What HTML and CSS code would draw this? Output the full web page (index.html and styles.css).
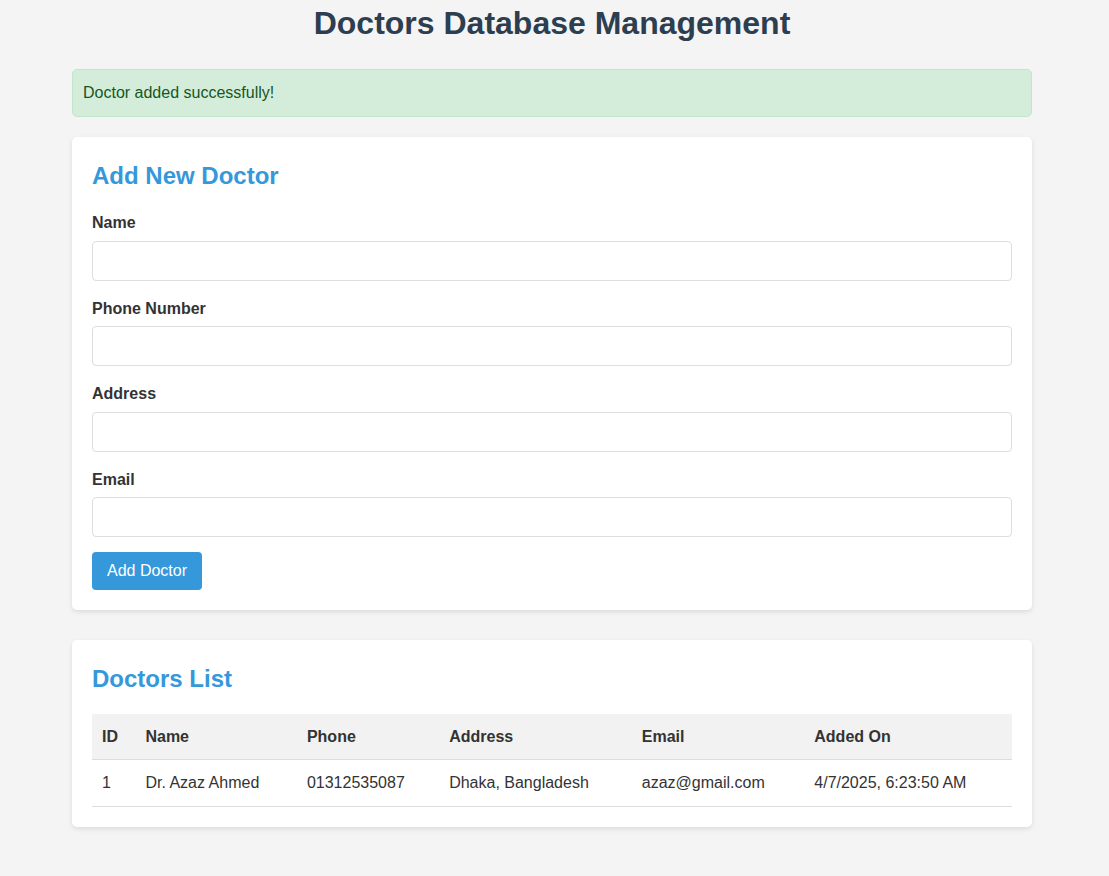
FILE: index.html
```html
<!DOCTYPE html>
<html lang="en">
<head>
<meta charset="UTF-8">
<title>Doctors Database Management</title>
<link rel="stylesheet" href="styles.css">
</head>
<body>
<div class="container">
  <h1 class="page-title">Doctors Database Management</h1>

  <div class="alert alert-success">Doctor added successfully!</div>

  <div class="card">
    <h2 class="card-title">Add New Doctor</h2>
    <form class="doctor-form">
      <div class="form-group">
        <label for="name">Name</label>
        <input type="text" id="name" class="form-input">
      </div>
      <div class="form-group">
        <label for="phone">Phone Number</label>
        <input type="text" id="phone" class="form-input">
      </div>
      <div class="form-group">
        <label for="address">Address</label>
        <input type="text" id="address" class="form-input">
      </div>
      <div class="form-group">
        <label for="email">Email</label>
        <input type="email" id="email" class="form-input">
      </div>
      <button type="button" class="btn">Add Doctor</button>
    </form>
  </div>

  <div class="card">
    <h2 class="card-title">Doctors List</h2>
    <table class="doctors-table">
      <thead>
        <tr>
          <th>ID</th>
          <th>Name</th>
          <th>Phone</th>
          <th>Address</th>
          <th>Email</th>
          <th>Added On</th>
        </tr>
      </thead>
      <tbody>
        <tr>
          <td>1</td>
          <td>Dr. Azaz Ahmed</td>
          <td>01312535087</td>
          <td>Dhaka, Bangladesh</td>
          <td>azaz@gmail.com</td>
          <td>4/7/2025, 6:23:50 AM</td>
        </tr>
      </tbody>
    </table>
  </div>
</div>
</body>
</html>
```

FILE: styles.css
```css
* {
  box-sizing: border-box;
}

html, body {
  margin: 0;
}

body {
  font-family: "Liberation Sans", Arial, sans-serif;
  background-color: #f4f4f4;
  color: #333;
  line-height: 1.6;
  padding: 3px 5px 0 0;
}

.container {
  max-width: 960px;
  margin: 0 auto;
}

.page-title {
  margin: 0 0 26px;
  font-size: 32px;
  line-height: 40px;
  text-align: center;
  color: #2c3e50;
}

.alert {
  padding: 10px;
  border-radius: 5px;
  margin-bottom: 20px;
  font-size: 16px;
}

.alert-success {
  background-color: #d4edda;
  border: 1px solid #c3e6cb;
  color: #155724;
}

.card {
  background: #fff;
  padding: 20px;
  border-radius: 5px;
  box-shadow: 0 2px 5px rgba(0, 0, 0, 0.1);
  margin-bottom: 30px;
}

.card-title {
  margin: 0 0 15px;
  font-size: 24px;
  color: #3498db;
}

.form-group {
  margin-bottom: 15px;
}

.form-group label {
  display: block;
  margin-bottom: 5px;
  font-weight: bold;
}

.form-input {
  display: block;
  width: 100%;
  padding: 10px;
  border: 1px solid #ddd;
  border-radius: 4px;
  font-size: 16px;
  font-family: "Liberation Sans", Arial, sans-serif;
  background: #fff;
}

.btn {
  background-color: #3498db;
  color: #fff;
  border: none;
  padding: 10px 15px;
  border-radius: 4px;
  font-size: 16px;
  font-family: "Liberation Sans", Arial, sans-serif;
  cursor: pointer;
}

.doctors-table {
  width: 100%;
  border-collapse: collapse;
}

.doctors-table th,
.doctors-table td {
  padding: 10px;
  text-align: left;
  border-bottom: 1px solid #ddd;
}

.doctors-table th {
  background-color: #f2f2f2;
  font-weight: bold;
}
```
